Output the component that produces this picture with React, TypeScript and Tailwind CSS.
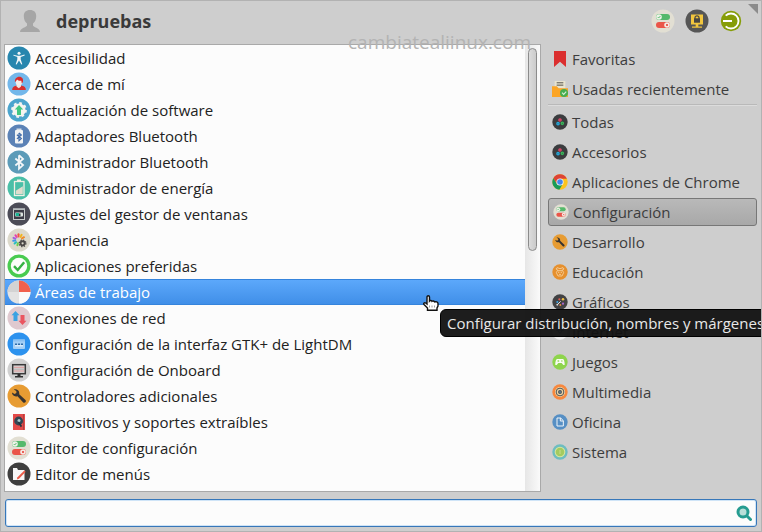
import React from "react";
import { useState } from "react";

type IconProps = { className?: string };

const Svg = ({ className, children }: { className?: string; children: React.ReactNode }) => (
  <svg viewBox="0 0 24 24" className={className} aria-hidden="true">
    {children}
  </svg>
);

const Disc = ({ fill }: { fill: string }) => <circle cx="12" cy="12" r="11.5" fill={fill} />;

const AccessIcon = ({ className }: IconProps) => (
  <Svg className={className}>
    <Disc fill="#2786ae" />
    <circle cx="12" cy="7.3" r="1.5" fill="#f3f6f8" />
    <path d="M6.5 8.8 10.5 9.8h3l4-1.2.2.8-4 1.5v2.6l1.6 4.8-.9.3L12 14.4l-2.4 4.2-.9-.3 1.600-4.800v-2.600l-4-1.400z" fill="#f3f6f8" />
  </Svg>
);

const AboutIcon = ({ className }: IconProps) => (
  <Svg className={className}>
    <Disc fill="#73b7ea" />
    <path d="M5.200 18c0-3 2.200-4 4.800-4.400h4c2.600.4 4.800 1.400 4.800 4.400z" fill="#d7302d" />
    <path d="M9.500 12h4.500v2.600l-2.200 1.600-2.300-1.600z" fill="#efe6df" />
    <circle cx="12" cy="10" r="3.400" fill="#f5ece6" />
    <path d="M8 10c-.5-3 1.500-5.300 4.300-5.300 3 0 4.400 2.300 3.500 5.600l-1 1.200-.5-2.800c-2 .2-3.300-.2-4.300-1.200-.3 1-.9 1.800-2 2.500z" fill="#d92b2b" />
  </Svg>
);

const UpdateIcon = ({ className }: IconProps) => (
  <Svg className={className}>
    <Disc fill="#4ba4cd" />
    <circle cx="12" cy="12" r="6.600" fill="#f4f4f0" />
    <circle cx="12" cy="12" r="6.900" fill="none" stroke="#f4f4f0" strokeWidth="2" strokeDasharray="2.710 2.710" />
    <path d="m12 7 4.200 4.600h-2.200V17h-4v-5.400H7.800z" fill="#42c882" />
  </Svg>
);

const rune = "M0-5v10l3-2.700L-2.700-2.600M0-5l3 2.700-5.700 4.900";

const AdapterIcon = ({ className }: IconProps) => (
  <Svg className={className}>
    <Disc fill="#5b82b6" />
    <path d="M9.500 4.500h5v2h-5z" fill="#d6dee6" />
    <rect x="8" y="6" width="8" height="13.500" rx="1" fill="#f1f3f4" />
    <path d={rune} transform="translate(12 12.800) scale(.78)" fill="none" stroke="#3f6aa8" strokeWidth="1.500" />
  </Svg>
);

const BluetoothIcon = ({ className }: IconProps) => (
  <Svg className={className}>
    <Disc fill="#5c9bb8" />
    <path d={rune} transform="translate(12 12) scale(1.350)" fill="none" stroke="#f5f7f8" strokeWidth="1.300" />
  </Svg>
);

const PowerIcon = ({ className }: IconProps) => (
  <Svg className={className}>
    <Disc fill="#4abfa7" />
    <path d="M10 3.500h4v2h-4z" fill="#f1efe4" />
    <rect x="7.500" y="5.500" width="9.500" height="14" fill="#49bfa7" stroke="#f1efe4" strokeWidth="1.300" />
    <path d="m8.800 14.800 7-4.500v8h-7z" fill="#dfddcd" />
  </Svg>
);

const WindowIcon = ({ className }: IconProps) => (
  <Svg className={className}>
    <Disc fill="#4c4c57" />
    <rect x="6.500" y="7" width="11" height="10.500" fill="#3c3c47" stroke="#c7cbcb" />
    <path d="M6 6.500h12V8H6z" fill="#b9bfc0" />
    <rect x="8" y="10.500" width="8" height="4" rx="1" fill="#dfe6e2" />
    <path d="M8.500 11h3.500v3H8.500z" fill="#1bb394" />
    <path d="M12 11.500h1.500V14H12z" fill="#2b3438" />
  </Svg>
);

const AppearanceIcon = ({ className }: IconProps) => (
  <Svg className={className}>
    <Disc fill="#dcd9cb" />
    <g strokeWidth="2" strokeLinecap="round">
      <path d="M11.500 6.300v2.200" stroke="#f05a3c" />
      <path d="m14.600 6.800-1.100 2.100" stroke="#f2b51d" />
      <path d="m17 9.200-2 1.200" stroke="#ef8b2c" />
      <path d="m8.400 7.200 1.300 1.800" stroke="#e83fae" />
      <path d="m6.500 9.800 1.900.8" stroke="#a45be0" />
      <path d="m6.300 12.800 2-.2" stroke="#4295ea" />
      <path d="m7.600 15.500 1.500-1.300" stroke="#28bfc0" />
      <path d="m10.400 17.200.5-2" stroke="#6fce4c" />
    </g>
    <circle cx="15.600" cy="15.300" r="3" fill="#4b4845" />
    <circle cx="15.600" cy="15.300" r="3.300" fill="none" stroke="#4b4845" strokeWidth="1.300" strokeDasharray="1.300 1.300" />
    <circle cx="15.600" cy="15.300" r="1.100" fill="#dcd9cb" />
  </Svg>
);

const PreferredIcon = ({ className }: IconProps) => (
  <Svg className={className}>
    <Disc fill="#49cb50" />
    <circle cx="12" cy="12" r="8.200" fill="#fbfdfb" />
    <path d="m7 12.200 3.700 3.800 6.500-7.700" fill="none" stroke="#35b244" strokeWidth="2.500" />
  </Svg>
);

const WorkspaceIcon = ({ className }: IconProps) => (
  <Svg className={className}>
    <Disc fill="#e3e3e3" />
    <path d="M12 12H.5A11.500 11.500 0 0 1 12 .5z" fill="#d3d3d3" />
    <path d="M12 12V.5A11.500 11.500 0 0 1 23.500 12z" fill="#f1604d" />
    <path d="M12 12h11.500A11.500 11.500 0 0 1 12 23.500z" fill="#fafafa" />
  </Svg>
);

const NetworkIcon = ({ className }: IconProps) => (
  <Svg className={className}>
    <Disc fill="#dfc9cf" />
    <path d="m8.500 5 4 4.300h-2V15h-4V9.300h-2z" fill="#3ba2e2" />
    <path d="m15.500 19-4-4.300h2V9h4v5.700h2z" fill="#ea5560" />
  </Svg>
);

const LightdmIcon = ({ className }: IconProps) => (
  <Svg className={className}>
    <Disc fill="#2c92ee" />
    <rect x="6" y="7.500" width="12" height="9.500" rx="1" fill="#a5d0f6" />
    <path d="M6 7.500h12v2H6z" fill="#8dc2f2" />
    <path d="M8 11.500h2v1.500H8zM11 11.500h2v1.500h-2zM14 11.500h2v1.500h-2z" fill="#2f6ca9" />
    <path d="M8 13.300h8v1H8z" fill="#eef6fd" />
  </Svg>
);

const OnboardIcon = ({ className }: IconProps) => (
  <Svg className={className}>
    <Disc fill="#d0d0d0" />
    <rect x="5.700" y="6.700" width="12.600" height="9" fill="#d8d4d4" stroke="#3a3a3a" strokeWidth="1.500" />
    <path d="M7 9.300h10M7 13h10" stroke="#df9a9a" strokeWidth="1" />
    <path d="M7 11.200h10" stroke="#aaa" strokeWidth=".8" />
    <path d="M10.500 16h3v2h2.500v1.400H8V18h2.500z" fill="#2f2f2f" />
  </Svg>
);

const WrenchIcon = ({ className }: IconProps) => (
  <Svg className={className}>
    <Disc fill="#e79c33" />
    <path
      d="M5 8.600 7.600 10l1.800-1-.1-2L6.800 5.400c2.600-.9 5.500.8 5.500 3.800l-.1 1.100 6.300 5.700c1.400 1.400-.8 3.700-2.300 2.400l-5.700-6.200C7.800 13.200 4.800 11.400 5 8.600z"
      fill="#383431"
    />
  </Svg>
);

const DriveIcon = ({ className }: IconProps) => (
  <Svg className={className}>
    <path d="M6 4h12v16H6z" fill="#e34a49" />
    <path d="M16 4h.8v16H16z" fill="#a83f40" />
    <circle cx="11.600" cy="11" r="4.400" fill="#304653" />
    <circle cx="12" cy="10.500" r="1.500" fill="#a9c8cc" />
    <path d="m11.500 11.500 3.700 4.500-1.500 1.200-2.700-4.700z" fill="#22333e" />
  </Svg>
);

const TogglesIcon = ({ className }: IconProps) => (
  <Svg className={className}>
    <Disc fill="#e2dfd3" />
    <rect x="5" y="5" width="14" height="6" rx="3" fill="#55b96b" />
    <circle cx="8" cy="8" r="2.800" fill="#edf3e8" />
    <path d="m6.700 8 1 1 1.700-2" fill="none" stroke="#55b96b" strokeWidth=".9" />
    <rect x="5" y="13" width="14" height="6" rx="3" fill="#ea5549" />
    <circle cx="16" cy="16" r="2.800" fill="#f6e8e2" />
    <path d="m15 15 2 2m0-2-2 2" stroke="#ea5549" strokeWidth=".9" />
  </Svg>
);

const MenuEditorIcon = ({ className }: IconProps) => (
  <Svg className={className}>
    <Disc fill="#3f3f3f" />
    <path d="M6 6h4l1 2h6.500v10H6z" fill="#f7f7f7" />
    <path d="m17.300 8.500 1.400 1.300-6.700 7-2.200.6.700-2.100z" fill="#e95b48" />
  </Svg>
);

const BookmarkIcon = ({ className }: IconProps) => (
  <Svg className={className}>
    <path d="M3 0h18v24l-9-8-9 8z" fill="#db2f2f" />
  </Svg>
);

const RecentIcon = ({ className }: IconProps) => (
  <Svg className={className}>
    <path d="M4 0h16v11H4z" fill="#e8e4d0" />
    <path d="M7 2.700h10M7 6.200h10" stroke="#55524a" strokeWidth="1.500" />
    <path d="M0 8h7l3 3h14v13H0z" fill="#fba526" />
    <circle cx="18" cy="18" r="6" fill="#45ad50" />
    <path d="m15 17.500 2.500 2.500 3.800-4" fill="none" stroke="#d6efd4" strokeWidth="1.700" />
  </Svg>
);

const AllIcon = ({ className }: IconProps) => (
  <Svg className={className}>
    <Disc fill="#3b3c3e" />
    <g fill="none" strokeWidth="2">
      <circle cx="12" cy="9" r="1.700" stroke="#e8476b" />
      <circle cx="9" cy="14.500" r="1.700" stroke="#24a9dc" />
      <circle cx="15.500" cy="14" r="1.700" stroke="#39b85c" />
    </g>
  </Svg>
);

const ChromeIcon = ({ className }: IconProps) => (
  <Svg className={className}>
    <Disc fill="#fcc31e" />
    <path d="M2 6.300a11.500 11.500 0 0 1 20 0L22 7H12l-4.500 7.500z" fill="#dd4336" />
    <path d="M2 6.300 7.500 15 12 17l3.500-1-4.500 7.500A11.500 11.500 0 0 1 2 6.300z" fill="#179b59" />
    <circle cx="12" cy="12" r="5.400" fill="#f4f4f4" />
    <circle cx="12" cy="12" r="4.200" fill="#4285ee" />
  </Svg>
);

const EducationIcon = ({ className }: IconProps) => (
  <Svg className={className}>
    <Disc fill="#e6902e" />
    <g fill="none" stroke="#f6d5a8" strokeWidth="1.200">
      <path d="m9 9.500-3-2 1.500-2L12 7l4.500-1.500 1.500 2-3 2M8 10l-1.500 3L9 18h6l2.500-5-1.500-3z" />
      <path d="M9 12.500h2M13 12.500h2M10.500 15.500h3" />
    </g>
  </Svg>
);

const GraphicsIcon = ({ className }: IconProps) => (
  <Svg className={className}>
    <Disc fill="#424244" />
    <path d="m9 15 4-4" stroke="#e5e2de" strokeWidth="1.500" />
    <circle cx="8" cy="12" r="1.600" fill="#3ea4df" />
    <circle cx="11" cy="8" r="1.600" fill="#df5d52" />
    <circle cx="16.500" cy="8" r="1.900" fill="#efbd40" />
    <circle cx="16.500" cy="14.500" r="1.700" fill="#a866c7" />
    <circle cx="12.500" cy="16.500" r="1.500" fill="#e9863c" />
    <circle cx="8" cy="16" r="1.400" fill="#e5e2de" />
  </Svg>
);

const InternetIcon = ({ className }: IconProps) => (
  <Svg className={className}>
    <Disc fill="#f0f0f0" />
    <path d="M6 9h12M12 4c-4 4-4 6 0 10 4-4 4-6 0-10z" fill="none" stroke="#5d97c4" strokeWidth="1.500" />
  </Svg>
);

const GamesIcon = ({ className }: IconProps) => (
  <Svg className={className}>
    <Disc fill="#8ed44c" />
    <path d="M7.500 7.500h9c1.500 0 3 6 2.500 9h-2l-2.500-3h-5L7 16.500H5c-.5-3 1-9 2.500-9z" fill="#f8fbf3" />
    <path d="M8 10.500h3M9.500 9v3" stroke="#8ed44c" strokeWidth="1" />
    <circle cx="14.800" cy="10.500" r="1.100" fill="#8ed44c" />
  </Svg>
);

const MultimediaIcon = ({ className }: IconProps) => (
  <Svg className={className}>
    <Disc fill="#f7883e" />
    <circle cx="12" cy="12" r="7.600" fill="#efd5a5" />
    <circle cx="12" cy="12" r="5.800" fill="none" stroke="#4c5257" strokeWidth="1.500" />
    <circle cx="12" cy="12" r="2.900" fill="#464d53" />
    <circle cx="12" cy="12" r="1" fill="#84b1c9" />
  </Svg>
);

const OfficeIcon = ({ className }: IconProps) => (
  <Svg className={className}>
    <Disc fill="#568fc4" />
    <path d="M7.500 6h5.500l4 4v8H7.500z" fill="none" stroke="#f0f5f9" strokeWidth="1.500" />
    <path d="M12.500 6v4.500H17" fill="none" stroke="#f0f5f9" strokeWidth="1.500" />
  </Svg>
);

const SystemIcon = ({ className }: IconProps) => (
  <Svg className={className}>
    <Disc fill="#6dbdc0" />
    <circle cx="12" cy="12" r="8" fill="#d8e6a0" />
    <circle cx="12" cy="12" r="6.500" fill="#a4cb5f" />
    <path d="M12 9v6" stroke="#c6dd8e" strokeWidth="1.500" />
  </Svg>
);

const LockIcon = ({ className }: IconProps) => (
  <Svg className={className}>
    <Disc fill="#565656" />
    <path d="M6 5.500h12v10h-4.700v2H17v1.300H7v-1.300h3.700v-2H6z" fill="#f2c63e" />
    <rect x="9" y="9.300" width="6" height="4.400" fill="#494642" />
    <path d="M10 10V8.800a2 2 0 0 1 4 0V10" fill="none" stroke="#494642" strokeWidth="1.200" />
  </Svg>
);

const LogoutIcon = ({ className }: IconProps) => (
  <Svg className={className}>
    <circle cx="12" cy="12" r="10.200" fill="#869d08" />
    <path d="M6.700 6.700a7.500 7.500 0 1 1 0 10.600M4 12h9" fill="none" stroke="#fff" strokeWidth="1.900" />
  </Svg>
);

const apps = [
  { name: "Accesibilidad", Icon: AccessIcon },
  { name: "Acerca de mí", Icon: AboutIcon },
  { name: "Actualización de software", Icon: UpdateIcon },
  { name: "Adaptadores Bluetooth", Icon: AdapterIcon },
  { name: "Administrador Bluetooth", Icon: BluetoothIcon },
  { name: "Administrador de energía", Icon: PowerIcon },
  { name: "Ajustes del gestor de ventanas", Icon: WindowIcon },
  { name: "Apariencia", Icon: AppearanceIcon },
  { name: "Aplicaciones preferidas", Icon: PreferredIcon },
  { name: "Áreas de trabajo", Icon: WorkspaceIcon, tip: "Configurar distribución, nombres y márgenes" },
  { name: "Conexiones de red", Icon: NetworkIcon },
  { name: "Configuración de la interfaz GTK+ de LightDM", Icon: LightdmIcon },
  { name: "Configuración de Onboard", Icon: OnboardIcon },
  { name: "Controladores adicionales", Icon: WrenchIcon },
  { name: "Dispositivos y soportes extraíbles", Icon: DriveIcon },
  { name: "Editor de configuración", Icon: TogglesIcon },
  { name: "Editor de menús", Icon: MenuEditorIcon },
];

const shortcuts = [
  { name: "Favoritas", Icon: BookmarkIcon },
  { name: "Usadas recientemente", Icon: RecentIcon },
];

const categories = [
  { name: "Todas", Icon: AllIcon },
  { name: "Accesorios", Icon: AllIcon },
  { name: "Aplicaciones de Chrome", Icon: ChromeIcon },
  { name: "Configuración", Icon: TogglesIcon },
  { name: "Desarrollo", Icon: WrenchIcon },
  { name: "Educación", Icon: EducationIcon },
  { name: "Gráficos", Icon: GraphicsIcon },
  { name: "Internet", Icon: InternetIcon },
  { name: "Juegos", Icon: GamesIcon },
  { name: "Multimedia", Icon: MultimediaIcon },
  { name: "Oficina", Icon: OfficeIcon },
  { name: "Sistema", Icon: SystemIcon },
];

const Header = () => (
  <header className="relative flex h-[43px] items-center pb-1 pl-[17px] pr-[18px]">
    <svg viewBox="0 0 24 24" className="size-6 text-[#a6a6a6]" aria-hidden="true">
      <path
        d="M12 1c4 0 6.200 2.200 6.200 6.200 0 3.300-1.400 6-3.200 7.300v2.300c1.500 1.700 6.500 2.200 7 6.200H2c.5-4 5.500-4.500 7-6.200v-2.300c-1.800-1.300-3.200-4-3.200-7.300C5.800 3.200 8 1 12 1z"
        fill="currentColor"
      />
    </svg>
    <h1 className="ml-[14px] grow text-lg font-bold">depruebas</h1>
    <div className="flex gap-[10px]">
      <button type="button" aria-label="Configuración">
        <TogglesIcon className="size-6" />
      </button>
      <button type="button" aria-label="Bloquear pantalla">
        <LockIcon className="size-6" />
      </button>
      <button type="button" aria-label="Cerrar sesión">
        <LogoutIcon className="size-6" />
      </button>
    </div>
    <svg viewBox="0 0 10 10" className="absolute right-[3px] top-[3px] size-[10px]" aria-hidden="true">
      <path d="M0 0h10v10z" fill="#8c8c8c" />
    </svg>
    <span className="absolute right-[230px] top-[29px] z-10 text-[19px] leading-6 text-[#b3b3b3]">
      cambiatealiinux.com
    </span>
  </header>
);

const Pointer = () => (
  <svg viewBox="0 0 16 16" className="absolute right-[86px] top-4 z-20 size-4" aria-hidden="true">
    <path
      d="M4 9V2C4 .3 6.500.3 6.500 2v4c.6-.8 2.200-.7 2.500.3.700-.6 2.200-.3 2.500.6 1.500-.5 3.500.1 3.500 1.600V11l-1 2v2.300H4.500V13L1 9.500C.2 8.500 1.500 7.200 2.700 8z"
      fill="#fff"
      stroke="#111"
      strokeWidth="1.400"
    />
    <path d="M6.500 10.500v2M9 10.500v2M11.500 10.500v2" stroke="#888" strokeWidth=".8" />
  </svg>
);

const AppList = () => {
  const [selected, setSelected] = useState("Áreas de trabajo");

  return (
    <main className="flex grow border border-[#a9a9a9] bg-[#fcfcfc]">
      <ul className="grow pb-1 text-[#222]">
        {apps.map(({ name, Icon, tip }) => (
          <li key={name} className="relative">
            <button
              type="button"
              onClick={() => setSelected(name)}
              className={
                name === selected
                  ? "flex h-[26px] w-full items-center gap-1 border-y border-[#3584dc] bg-linear-to-b from-[#5ca8fb] to-[#408fe8] pl-[2px] text-left text-white"
                  : "flex h-[26px] w-full items-center gap-1 pl-[2px] text-left"
              }
            >
              <Icon className="size-6 shrink-0" />
              {name}
            </button>
            {tip && name === selected && (
              <>
                <Pointer />
                <div
                  role="tooltip"
                  className="absolute left-[435px] top-[30px] z-10 h-7 whitespace-nowrap rounded-md border border-black bg-[#111]/95 px-[6px] leading-[26px] text-[#e8e8e8]"
                >
                  {tip}
                </div>
              </>
            )}
          </li>
        ))}
      </ul>
      <div className="w-[15px] bg-linear-to-r from-[#e6e6e6] to-[#fafafa] p-[3px]">
        <div className="h-[203px] rounded-full border border-[#8b8b8b] bg-linear-to-r from-[#dcdcdc] to-[#cbcbcb]" />
      </div>
    </main>
  );
};

const Sidebar = () => {
  const [current, setCurrent] = useState("Configuración");

  const renderItem = ({ name, Icon }: { name: string; Icon: React.FC<IconProps> }) => (
    <button
      key={name}
      type="button"
      onClick={() => setCurrent(name)}
      className={
        name === current
          ? "my-px flex h-7 items-center gap-1 rounded-[3px] border border-[#777] bg-linear-to-b from-[#b9b9b9] to-[#a8a8a8] px-1 text-left"
          : "my-px flex h-7 items-center gap-1 border border-transparent px-[3px] text-left"
      }
    >
      <Icon className="size-4 shrink-0" />
      {name}
    </button>
  );

  return (
    <nav className="flex w-[209px] shrink-0 flex-col text-[#3d3d3d]">
      {shortcuts.map(renderItem)}
      <hr className="mb-px border-b border-t border-b-[#dcdcdc] border-t-[#b9b9b9]" />
      {categories.map(renderItem)}
    </nav>
  );
};

const SearchBar = () => (
  <form className="px-1 pb-1 pt-[7px]" onSubmit={(e) => e.preventDefault()}>
    <div className="flex h-7 items-center rounded-[3px] border border-[#3777b9] bg-[#fcfcfc] pr-1 shadow-[inset_0_0_0_1px_#cfe4f7]">
      <input type="text" aria-label="Buscar" className="h-full grow bg-transparent px-2 outline-none" />
      <svg viewBox="0 0 16 16" className="size-4" aria-hidden="true">
        <path d="m10.500 10.500 4 4" stroke="#259c91" strokeWidth="3" strokeLinecap="round" />
        <circle cx="7" cy="7" r="5" fill="#b8dfd9" stroke="#259c91" strokeWidth="3" />
      </svg>
    </div>
  </form>
);

const App = () => {
  return (
    <div className="flex min-h-screen flex-col overflow-hidden border border-[#b2b2b2] bg-[#cecece] font-['Open_Sans',sans-serif] text-[15px] text-[#3a3a3a]">
      <Header />
      <div className="flex grow gap-[7px] pl-[3px] pr-1">
        <AppList />
        <Sidebar />
      </div>
      <SearchBar />
    </div>
  );
};

export default App;
